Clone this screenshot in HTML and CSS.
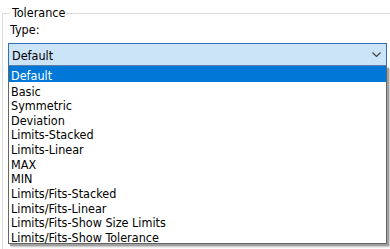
FILE: index.html
```html
<!DOCTYPE html>
<html>
<head>
<meta charset="utf-8">
<link rel="stylesheet" href="styles.css">
</head>
<body>
<div class="group">
  <span class="legend">Tolerance</span>
  <div class="field-label">Type:</div>
  <div class="combo">
    <span class="combo-value">Default</span>
    <svg class="chev" width="9" height="6" viewBox="0 0 9 6"><path d="M0.5 0.5 L4.5 4.5 L8.5 0.5" fill="none" stroke="#444" stroke-width="1.2"/></svg>
  </div>
  <ul class="list">
    <li class="sel">Default</li>
    <li>Basic</li>
    <li>Symmetric</li>
    <li>Deviation</li>
    <li>Limits-Stacked</li>
    <li>Limits-Linear</li>
    <li>MAX</li>
    <li>MIN</li>
    <li>Limits/Fits-Stacked</li>
    <li>Limits/Fits-Linear</li>
    <li>Limits/Fits-Show Size Limits</li>
    <li>Limits/Fits-Show Tolerance</li>
  </ul>
</div>
</body>
</html>
```
FILE: styles.css
```css
html, body {
  margin: 0;
  padding: 0;
  background: #fff;
}
body {
  font-family: "DejaVu Sans Condensed", "DejaVu Sans", sans-serif;
  font-size: 12.5px;
  color: #000;
  width: 390px;
  height: 249px;
  overflow: hidden;
}
.group {
  position: relative;
  margin: 13px 0 0 2px;
  border-top: 1px solid #dcdcdc;
  border-left: 1px solid #dcdcdc;
  padding: 8px 3px 0 5px;
  height: 235px;
}
.legend {
  position: absolute;
  top: -9px;
  left: 7px;
  padding: 0 2px;
  background: #fff;
  line-height: 16px;
}
.field-label {
  line-height: 16px;
  padding-left: 2px;
  margin-bottom: 5px;
}
.combo {
  display: flex;
  align-items: center;
  justify-content: space-between;
  height: 20px;
  border: 1px solid #2f6fb3;
  border-bottom-color: #5a7fa8;
  background: #cce4f7;
  padding: 1px 5px 0 3px;
  box-sizing: content-box;
}
.chev {
  display: block;
}
.list {
  list-style: none;
  margin: 0;
  padding: 0;
  border: 1px solid #646464;
  border-top: none;
  box-shadow: 2px 2px 1px #a0a0a0, 3px 3px 2px #c8c8c8;
  background: #fff;
}
.list li {
  height: 11.65px;
  padding-top: 3px;
  line-height: 14px;
  padding-left: 2px;
  white-space: nowrap;
}
.list li.sel {
  background: #0078d7;
  color: #fff;
  height: 12.5px;
}
```
